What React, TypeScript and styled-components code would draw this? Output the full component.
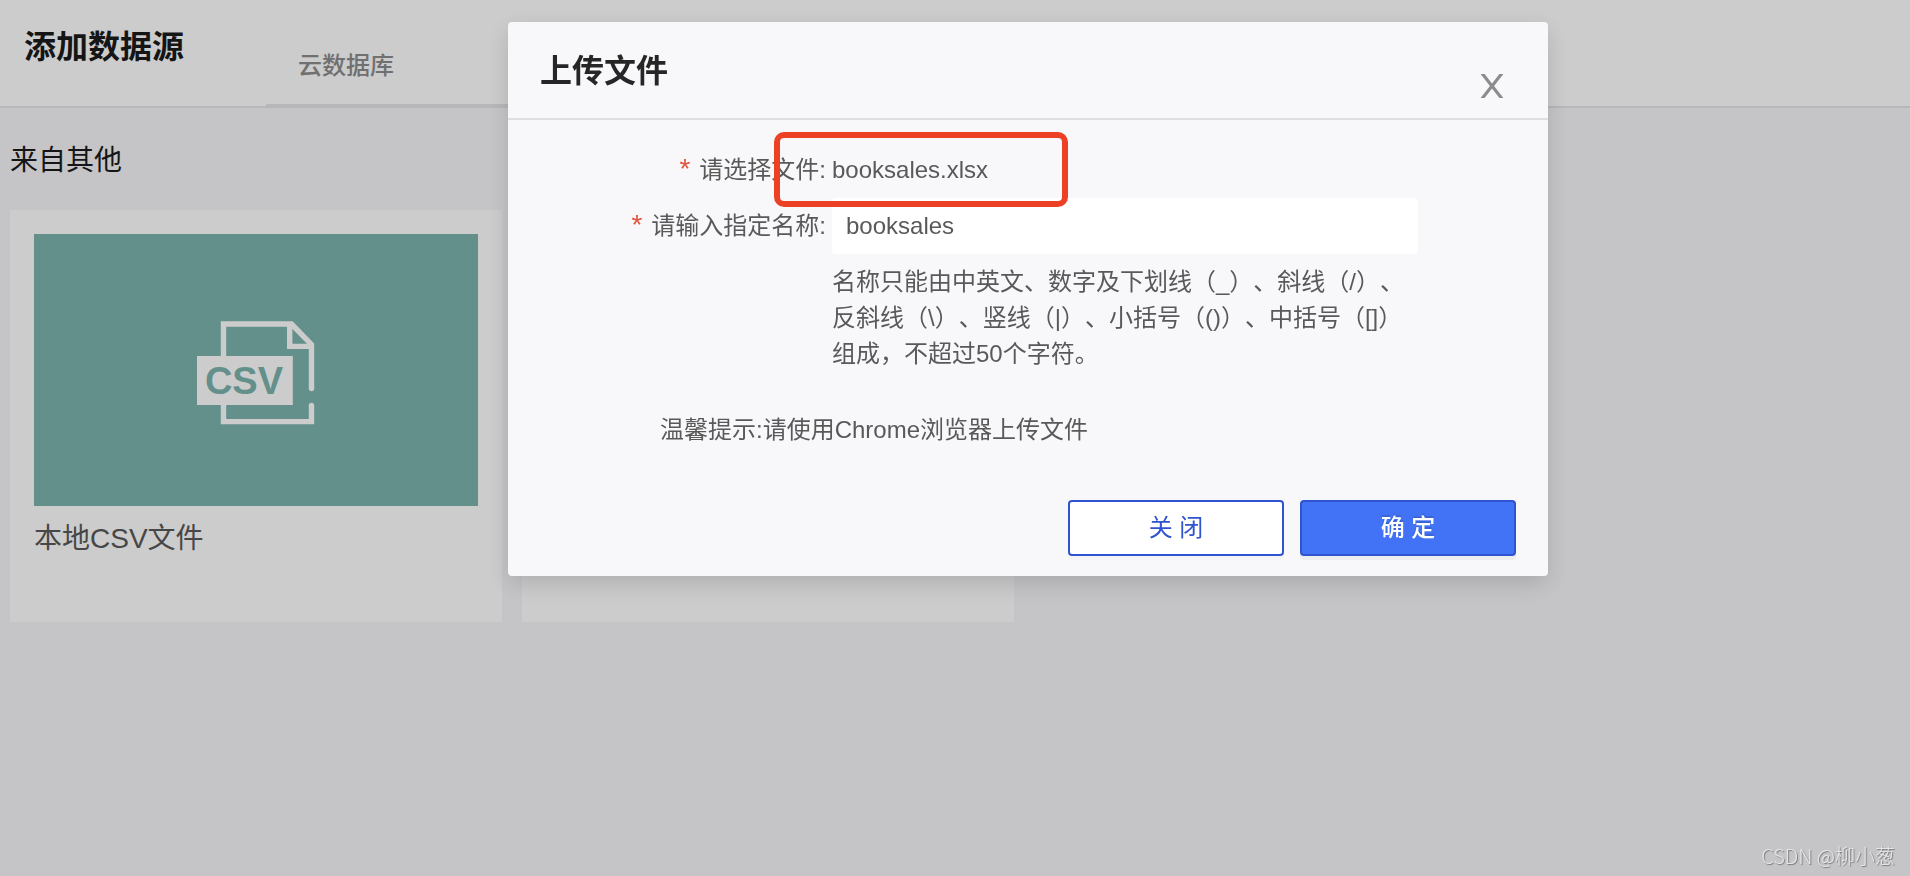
import React, { useState } from "react";
import styled, { createGlobalStyle } from "styled-components";

const GlobalStyle = createGlobalStyle`
  *, *::before, *::after { box-sizing: border-box; }
  body {
    margin: 0;
    background: #f7f7fa;
    color: #595959;
    font-family: "Liberation Sans", "Noto Sans CJK SC", sans-serif;
    font-size: 24px;
    line-height: 36px;
    text-spacing-trim: space-all;
  }
  h1, h2, h3, p { margin: 0; }
  button, input { font: inherit; }
`;

const Page = styled.div`
  min-height: 100vh;
`;

const Header = styled.header`
  display: flex;
  height: 108px;
  background: #fff;
  border-bottom: 2px solid #e5e5e6;
`;

const PageTitle = styled.h1`
  width: 266px;
  padding: 24px 0 0 24px;
  color: #1b1b1b;
  font-size: 32px;
  font-weight: 700;
  line-height: 46px;
`;

const Tabs = styled.nav`
  display: flex;
  width: 30%;
  height: 108px;
  border-bottom: 4px solid #e5e5e6;
`;

const Tab = styled.a`
  padding: 48px 32px 0;
  color: #8c8c8c;
  font-weight: 500;
  text-decoration: none;
`;

const Content = styled.main`
  padding: 32px 10px;
`;

const SectionTitle = styled.h2`
  color: #1b1b1b;
  font-size: 28px;
  font-weight: 400;
  line-height: 42px;
`;

const Cards = styled.div`
  display: flex;
  gap: 20px;
  margin-top: 28px;
`;

const Card = styled.article`
  width: 492px;
  min-height: 412px;
  padding: 24px;
  background: #fff;
`;

const Cover = styled.div`
  display: flex;
  align-items: center;
  justify-content: center;
  height: 272px;
  background: #7db4af;
`;

const CardTitle = styled.h3`
  margin-top: 12px;
  font-size: 28px;
  font-weight: 400;
  line-height: 42px;
`;

const Overlay = styled.div`
  position: fixed;
  inset: 0;
  display: flex;
  align-items: flex-start;
  justify-content: center;
  padding: 22px 0 0 146px;
  background: rgba(0, 0, 0, 0.2);
`;

const Dialog = styled.section`
  width: 1040px;
  max-width: 100%;
  border-radius: 4px;
  background: #f8f8fb;
  box-shadow: 0 8px 24px rgba(0, 0, 0, 0.15);
`;

const DialogHeader = styled.div`
  display: flex;
  justify-content: space-between;
  height: 98px;
  padding: 26px 32px 0;
  border-bottom: 2px solid #dfdfe1;
`;

const DialogTitle = styled.h2`
  color: #262626;
  font-size: 32px;
  font-weight: 700;
  line-height: 46px;
`;

const CloseButton = styled.button`
  align-self: flex-start;
  display: flex;
  justify-content: center;
  width: 48px;
  margin-top: 26px;
  padding: 0;
  border: 0;
  background: none;
  color: #8c8c8c;
  cursor: pointer;
`;

const Form = styled.form`
  padding-top: 22px;
`;

const Field = styled.div`
  position: relative;
  display: grid;
  grid-template-columns: 318px 586px;
  column-gap: 6px;
  align-items: center;
  min-height: 56px;
`;

const Label = styled.label`
  text-align: right;
`;

const Required = styled.span`
  margin-right: 9px;
  color: #e2543f;
  font-size: 28px;
  line-height: 24px;
`;

const TextInput = styled.input`
  width: 100%;
  height: 56px;
  padding: 0 14px;
  border: 0;
  border-radius: 4px;
  outline: 0;
  background: #fff;
  color: inherit;
`;

const Highlight = styled.span`
  position: absolute;
  top: -10px;
  left: 266px;
  z-index: 1;
  width: 294px;
  height: 75px;
  border: 6px solid #ed4126;
  border-radius: 10px;
  pointer-events: none;
`;

const Help = styled.p`
  width: 586px;
  margin: 10px 0 0 324px;
`;

const Tip = styled.p`
  margin: 40px 0 0 152px;
`;

const Actions = styled.div`
  display: flex;
  justify-content: flex-end;
  gap: 16px;
  padding: 52px 32px 20px;
`;

const Button = styled.button<{ $primary?: boolean }>`
  width: 216px;
  height: 56px;
  padding: 0;
  border: 2px solid #2f54cf;
  border-radius: 4px;
  background: ${(p) => (p.$primary ? "#4273f7" : "#fff")};
  color: ${(p) => (p.$primary ? "#fff" : "#2f54cf")};
  font-weight: ${(p) => (p.$primary ? 500 : 400)};
  text-shadow: ${(p) => (p.$primary ? "0 -2px 0 rgba(0, 0, 0, 0.12)" : "none")};
  box-shadow: 0 4px 0 ${(p) => (p.$primary ? "rgba(0, 0, 0, 0.045)" : "rgba(0, 0, 0, 0.015)")};
  cursor: pointer;
`;

const Watermark = styled.span`
  position: fixed;
  right: 15px;
  bottom: 6px;
  color: #e6e6e7;
  font-family: "Noto Sans CJK SC", sans-serif;
  font-size: 20px;
  font-weight: 300;
  line-height: 28px;
  text-shadow: 1px 1px 1px #77777a;
`;

function CsvIcon() {
  return (
    <svg width="120" height="112" viewBox="16 14 120 112" fill="none" aria-hidden="true">
      <g stroke="#fff" strokeWidth="5.4">
        <path d="M43.5 56V24H111.5L131.5 44.5V88.5" />
        <path d="M109.7 24V46.4H131.5" />
        <path d="M43.5 105V121.6H131.5V105.5" />
      </g>
      <circle cx="131.5" cy="88.5" r="2.7" fill="#fff" />
      <circle cx="131.5" cy="105.5" r="2.7" fill="#fff" />
      <rect x="17" y="56" width="95.8" height="49" fill="#fff" />
      <text
        x="64"
        y="94"
        textAnchor="middle"
        fill="#7db4af"
        fontFamily="Liberation Sans, sans-serif"
        fontWeight="700"
        fontSize="38"
      >
        CSV
      </text>
    </svg>
  );
}

export default function App() {
  const [name, setName] = useState("booksales");
  return (
    <>
      <GlobalStyle />
      <Page>
        <Header>
          <PageTitle>添加数据源</PageTitle>
          <Tabs>
            <Tab href="#cloud">云数据库</Tab>
          </Tabs>
        </Header>
        <Content>
          <SectionTitle>来自其他</SectionTitle>
          <Cards>
            <Card>
              <Cover>
                <CsvIcon />
              </Cover>
              <CardTitle>本地CSV文件</CardTitle>
            </Card>
            <Card />
          </Cards>
        </Content>
      </Page>
      <Overlay>
        <Dialog role="dialog" aria-modal="true" aria-labelledby="upload-title">
          <DialogHeader>
            <DialogTitle id="upload-title">上传文件</DialogTitle>
            <CloseButton type="button" aria-label="关闭">
              <svg width="24" height="24" viewBox="0 0 24 24" fill="currentColor" aria-hidden="true">
                <path d="M0.6 0H4.6L12 9.6L19.4 0H23.4L14.1 12L23.4 24H19.4L12 14.4L4.6 24H0.6L9.9 12Z" />
              </svg>
            </CloseButton>
          </DialogHeader>
          <Form onSubmit={(e) => e.preventDefault()}>
            <Field>
              <Label as="span">
                <Required>*</Required>请选择文件:
              </Label>
              <span>booksales.xlsx</span>
              <Highlight />
            </Field>
            <Field>
              <Label htmlFor="source-name">
                <Required>*</Required>请输入指定名称:
              </Label>
              <TextInput
                id="source-name"
                aria-describedby="name-help"
                value={name}
                onChange={(e) => setName(e.target.value)}
              />
            </Field>
            <Help id="name-help">
              名称只能由中英文、数字及下划线（_）、斜线（/）、反斜线（\）、竖线（|）、小括号（()）、中括号（[]）组成，不超过50个字符。
            </Help>
            <Tip>温馨提示:请使用Chrome浏览器上传文件</Tip>
            <Actions>
              <Button type="button">关 闭</Button>
              <Button type="submit" $primary>
                确 定
              </Button>
            </Actions>
          </Form>
        </Dialog>
      </Overlay>
      <Watermark>CSDN @柳小葱</Watermark>
    </>
  );
}
